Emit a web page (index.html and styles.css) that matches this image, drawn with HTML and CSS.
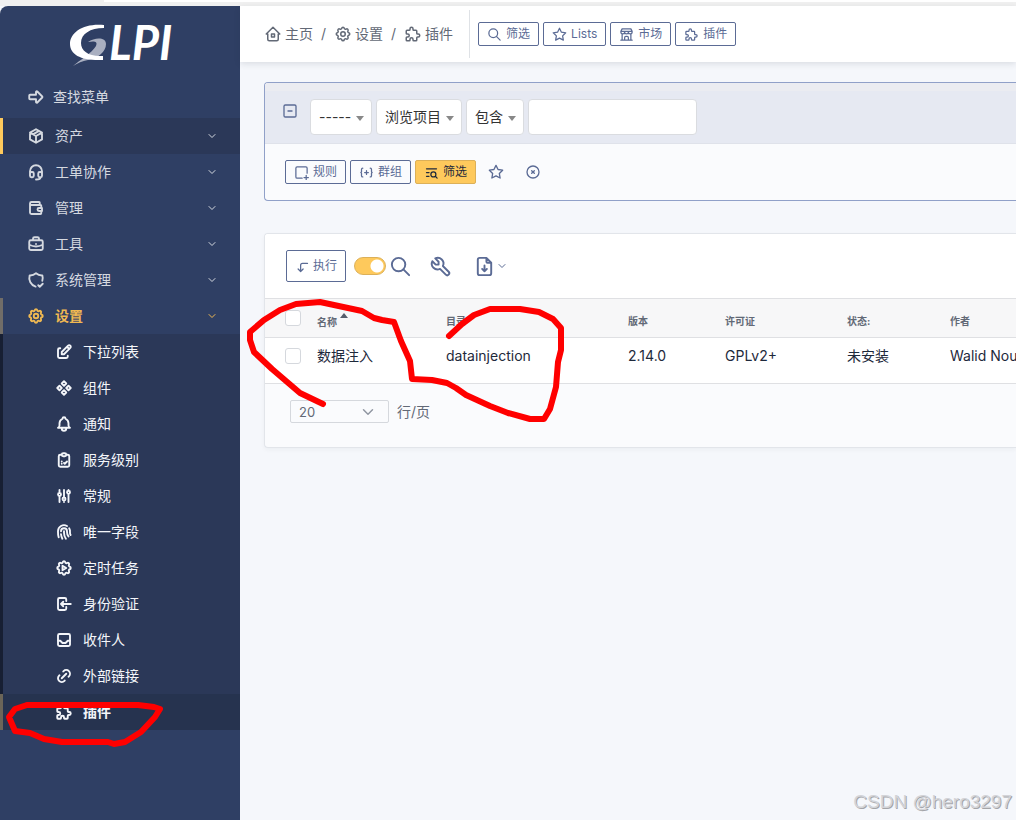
FILE: index.html
```html
<!DOCTYPE html>
<html lang="zh-CN">
<head>
    <meta charset="UTF-8">
    <meta name="viewport" content="width=device-width, initial-scale=1.0">
    <title>GLPI - 插件</title>
    <link rel="stylesheet" href="styles.css">
</head>
<body>
    <!-- Icons -->
    <svg class="sprite" aria-hidden="true">
        <symbol id="i-arrow" viewBox="0 0 24 24"><path d="M4 9h8v-3.586a1 1 0 0 1 1.707 -.707l6.586 6.586a1 1 0 0 1 0 1.414l-6.586 6.586a1 1 0 0 1 -1.707 -.707v-3.586h-8a1 1 0 0 1 -1 -1v-4a1 1 0 0 1 1 -1z"/></symbol>
        <symbol id="i-package" viewBox="0 0 24 24"><path d="M12 3l8 4.5v9l-8 4.5l-8 -4.5v-9l8 -4.5M12 12l8 -4.5M12 12v9M12 12l-8 -4.5M16 5.25l-8 4.5"/></symbol>
        <symbol id="i-headset" viewBox="0 0 24 24"><path d="M4 14v-3a8 8 0 1 1 16 0v3M18 19c0 1.657 -2.686 3 -6 3M4 14a2 2 0 0 1 2 -2h1a2 2 0 0 1 2 2v3a2 2 0 0 1 -2 2h-1a2 2 0 0 1 -2 -2zM15 14a2 2 0 0 1 2 -2h1a2 2 0 0 1 2 2v3a2 2 0 0 1 -2 2h-1a2 2 0 0 1 -2 -2z"/></symbol>
        <symbol id="i-wallet" viewBox="0 0 24 24"><path d="M17 8v-3a1 1 0 0 0 -1 -1h-10a2 2 0 0 0 0 4h12a1 1 0 0 1 1 1v3m0 4v3a1 1 0 0 1 -1 1h-12a2 2 0 0 1 -2 -2v-12M20 12v4h-4a2 2 0 0 1 0 -4h4"/></symbol>
        <symbol id="i-briefcase" viewBox="0 0 24 24"><path d="M3 9a2 2 0 0 1 2 -2h14a2 2 0 0 1 2 2v9a2 2 0 0 1 -2 2h-14a2 2 0 0 1 -2 -2zM8 7v-2a2 2 0 0 1 2 -2h4a2 2 0 0 1 2 2v2M12 12v.01M3 13a20 20 0 0 0 18 0"/></symbol>
        <symbol id="i-shield" viewBox="0 0 24 24"><path d="M11.46 20.846a12 12 0 0 1 -7.96 -14.846a12 12 0 0 0 8.5 -3a12 12 0 0 0 8.5 3a12 12 0 0 1 -.09 7.06M15 19l2 2l4 -4"/></symbol>
        <symbol id="i-gear" viewBox="0 0 24 24"><path d="M10.325 4.317c.426 -1.756 2.924 -1.756 3.35 0a1.724 1.724 0 0 0 2.573 1.066c1.543 -.94 3.31 .826 2.37 2.37a1.724 1.724 0 0 0 1.065 2.572c1.756 .426 1.756 2.924 0 3.35a1.724 1.724 0 0 0 -1.066 2.573c.94 1.543 -.826 3.31 -2.37 2.37a1.724 1.724 0 0 0 -2.572 1.065c-.426 1.756 -2.924 1.756 -3.35 0a1.724 1.724 0 0 0 -2.573 -1.066c-1.543 .94 -3.31 -.826 -2.37 -2.37a1.724 1.724 0 0 0 -1.065 -2.572c-1.756 -.426 -1.756 -2.924 0 -3.35a1.724 1.724 0 0 0 1.066 -2.573c-.94 -1.543 .826 -3.31 2.37 -2.37c1 .608 2.296 .07 2.572 -1.065z"/><circle cx="12" cy="12" r="3"/></symbol>
        <symbol id="i-auto" viewBox="0 0 24 24"><path d="M10.325 4.317c.426 -1.756 2.924 -1.756 3.35 0a1.724 1.724 0 0 0 2.573 1.066c1.543 -.94 3.31 .826 2.37 2.37a1.724 1.724 0 0 0 1.065 2.572c1.756 .426 1.756 2.924 0 3.35a1.724 1.724 0 0 0 -1.066 2.573c.94 1.543 -.826 3.31 -2.37 2.37a1.724 1.724 0 0 0 -2.572 1.065c-.426 1.756 -2.924 1.756 -3.35 0a1.724 1.724 0 0 0 -2.573 -1.066c-1.543 .94 -3.31 -.826 -2.37 -2.37a1.724 1.724 0 0 0 -1.065 -2.572c-1.756 -.426 -1.756 -2.924 0 -3.35a1.724 1.724 0 0 0 1.066 -2.573c-.94 -1.543 .826 -3.31 2.37 -2.37c1 .608 2.296 .07 2.572 -1.065zM10 9v6l5 -3z"/></symbol>
        <symbol id="i-edit" viewBox="0 0 24 24"><path d="M7 7h-1a2 2 0 0 0 -2 2v9a2 2 0 0 0 2 2h9a2 2 0 0 0 2 -2v-1M20.385 6.585a2.1 2.1 0 0 0 -2.97 -2.97l-8.415 8.385v3h3l8.385 -8.415zM16 5l3 3"/></symbol>
        <symbol id="i-components" viewBox="0 0 24 24"><path d="M3 12l3 3l3 -3l-3 -3zM15 12l3 3l3 -3l-3 -3zM9 6l3 3l3 -3l-3 -3zM9 18l3 3l3 -3l-3 -3z"/></symbol>
        <symbol id="i-bell" viewBox="0 0 24 24"><path d="M10 5a2 2 0 1 1 4 0a7 7 0 0 1 4 6v3a4 4 0 0 0 2 3h-16a4 4 0 0 0 2 -3v-3a7 7 0 0 1 4 -6M9 17v1a3 3 0 0 0 6 0v-1"/></symbol>
        <symbol id="i-checkup" viewBox="0 0 24 24"><path d="M9 5h-2a2 2 0 0 0 -2 2v12a2 2 0 0 0 2 2h10a2 2 0 0 0 2 -2v-12a2 2 0 0 0 -2 -2h-2M9 5a2 2 0 0 1 2 -2h2a2 2 0 0 1 2 2a2 2 0 0 1 -2 2h-2a2 2 0 0 1 -2 -2zM9 14h.01M9 17h.01M12 16l1 1l3 -3"/></symbol>
        <symbol id="i-adjust" viewBox="0 0 24 24"><path d="M4 10a2 2 0 1 0 4 0a2 2 0 0 0 -4 0M6 4v4M6 12v8M10 16a2 2 0 1 0 4 0a2 2 0 0 0 -4 0M12 4v10M12 18v2M16 7a2 2 0 1 0 4 0a2 2 0 0 0 -4 0M18 4v1M18 9v11"/></symbol>
        <symbol id="i-finger" viewBox="0 0 24 24"><path d="M18.9 7a8 8 0 0 1 1.1 5v1a6 6 0 0 0 .8 3M8 11a4 4 0 0 1 8 0v1a10 10 0 0 0 2 6M12 11v2a14 14 0 0 0 2.5 8M8 15a18 18 0 0 0 1.8 6M4.9 19a22 22 0 0 1 -.9 -7v-1a8 8 0 0 1 12 -6.95"/></symbol>
        <symbol id="i-login" viewBox="0 0 24 24"><path d="M15 8v-2a2 2 0 0 0 -2 -2h-7a2 2 0 0 0 -2 2v12a2 2 0 0 0 2 2h7a2 2 0 0 0 2 -2v-2M21 12h-13l3 -3M11 15l-3 -3"/></symbol>
        <symbol id="i-inbox" viewBox="0 0 24 24"><rect x="4" y="4" width="16" height="16" rx="2"/><path d="M4 13h3l3 3h4l3 -3h3"/></symbol>
        <symbol id="i-link" viewBox="0 0 24 24"><path d="M9 15l6 -6M11 6l.463 -.536a5 5 0 0 1 7.071 7.072l-.534 .464M13 18l-.397 .534a5.068 5.068 0 0 1 -7.127 0a4.972 4.972 0 0 1 0 -7.071l.524 -.463"/></symbol>
        <symbol id="i-puzzle" viewBox="0 0 24 24"><path d="M4 7h3a1 1 0 0 0 1 -1v-1a2 2 0 0 1 4 0v1a1 1 0 0 0 1 1h3a1 1 0 0 1 1 1v3a1 1 0 0 0 1 1h1a2 2 0 0 1 0 4h-1a1 1 0 0 0 -1 1v3a1 1 0 0 1 -1 1h-3a1 1 0 0 1 -1 -1v-1a2 2 0 0 0 -4 0v1a1 1 0 0 1 -1 1h-3a1 1 0 0 1 -1 -1v-3a1 1 0 0 1 1 -1h1a2 2 0 0 0 0 -4h-1a1 1 0 0 1 -1 -1v-3a1 1 0 0 1 1 -1"/></symbol>
        <symbol id="i-home" viewBox="0 0 24 24"><path d="M5 12h-2l9 -9l9 9h-2M5 12v7a2 2 0 0 0 2 2h10a2 2 0 0 0 2 -2v-7M10 12h4v4h-4z"/></symbol>
        <symbol id="i-star" viewBox="0 0 24 24"><path d="M12 17.75l-6.172 3.245l1.179 -6.873l-5 -4.867l6.9 -1l3.086 -6.253l3.086 6.253l6.9 1l-5 4.867l1.179 6.873z"/></symbol>
        <symbol id="i-search" viewBox="0 0 24 24"><circle cx="10" cy="10" r="7"/><path d="M21 21l-6 -6"/></symbol>
        <symbol id="i-store" viewBox="0 0 24 24"><path d="M3 21h18M3 7v1a3 3 0 0 0 6 0v-1m0 1a3 3 0 0 0 6 0v-1m0 1a3 3 0 0 0 6 0v-1h-18l2 -4h14l2 4M5 21v-10.15M19 21v-10.15M9 21v-4a2 2 0 0 1 2 -2h2a2 2 0 0 1 2 2v4"/></symbol>
        <symbol id="i-rule" viewBox="0 0 24 24"><path d="M13 21h-8a2 2 0 0 1 -2 -2v-14a2 2 0 0 1 2 -2h14a2 2 0 0 1 2 2v8M16 20h7M19.500 16.500v7"/></symbol>
        <symbol id="i-group" viewBox="0 0 24 24"><path d="M9 12h6M12 9v6M6 19a2 2 0 0 1 -2 -2v-4l-1 -1l1 -1v-4a2 2 0 0 1 2 -2M18 19a2 2 0 0 0 2 -2v-4l1 -1l-1 -1v-4a2 2 0 0 0 -2 -2"/></symbol>
        <symbol id="i-listsearch" viewBox="0 0 24 24"><circle cx="15" cy="15" r="4"/><path d="M18.500 18.500l2.500 2.500M4 6h16M4 12h4M4 18h4"/></symbol>
        <symbol id="i-clear" viewBox="0 0 24 24"><circle cx="12" cy="12" r="9"/><path d="M10 10l4 4M14 10l-4 4"/></symbol>
        <symbol id="i-minus" viewBox="0 0 24 24"><rect x="3" y="3" width="18" height="18" rx="2"/><path d="M9 12h6"/></symbol>
        <symbol id="i-tool" viewBox="0 0 24 24"><path d="M7 10h3v-3l-3.500 -3.500a6 6 0 0 1 8 8l6 6a2 2 0 0 1 -3 3l-6 -6a6 6 0 0 1 -8 -8l3.500 3.500"/></symbol>
        <symbol id="i-download" viewBox="0 0 24 24"><path d="M14 3v4a1 1 0 0 0 1 1h4M17 21h-10a2 2 0 0 1 -2 -2v-14a2 2 0 0 1 2 -2h7l5 5v11a2 2 0 0 1 -2 2zM12 17v-6M9.500 14.500l2.500 2.500l2.500 -2.500"/></symbol>
        <symbol id="i-corner" viewBox="0 0 24 24"><path d="M20 7h-8a3 3 0 0 0 -3 3v10l-4 -4m8 0l-4 4"/></symbol>
        <symbol id="i-chevron" viewBox="0 0 24 24"><path d="M6 9l6 6l6 -6"/></symbol>
    </svg>

    <div class="top-strip"><div class="tab"></div></div>

    <div class="page">
        <aside class="sidebar">
            <a class="logo" href="#" aria-label="GLPI">
                <svg width="120" height="52" viewBox="0 0 120 52">
                    <path class="logo-tail" d="M5 43C12 37 24 30 28 23C30 18 26 18 20 19C27 14 38 14 38 21C38 29 30 35 20 37C14 38 10 40 5 43z"/>
                    <path class="logo-mark" d="M36 2C16 0 2 9 2 21C2 32 14 38 35 37V33C21 34 13 28 13 20C13 11 22 5 36 5z"/>
                    <text class="logo-text" x="41" y="37">LPI</text>
                </svg>
            </a>
            <nav>
                <a class="find" href="#"><svg class="icon"><use href="#i-arrow"/></svg>查找菜单</a>
                <ul class="menu">
                    <li><a class="item current" href="#"><svg class="icon"><use href="#i-package"/></svg><span>资产</span><svg class="chevron"><use href="#i-chevron"/></svg></a></li>
                    <li><a class="item" href="#"><svg class="icon"><use href="#i-headset"/></svg><span>工单协作</span><svg class="chevron"><use href="#i-chevron"/></svg></a></li>
                    <li><a class="item" href="#"><svg class="icon"><use href="#i-wallet"/></svg><span>管理</span><svg class="chevron"><use href="#i-chevron"/></svg></a></li>
                    <li><a class="item" href="#"><svg class="icon"><use href="#i-briefcase"/></svg><span>工具</span><svg class="chevron"><use href="#i-chevron"/></svg></a></li>
                    <li><a class="item" href="#"><svg class="icon"><use href="#i-shield"/></svg><span>系统管理</span><svg class="chevron"><use href="#i-chevron"/></svg></a></li>
                    <li>
                        <a class="item open" href="#"><svg class="icon"><use href="#i-gear"/></svg><span>设置</span><svg class="chevron"><use href="#i-chevron"/></svg></a>
                        <ul class="submenu">
                            <li><a class="subitem" href="#"><svg class="icon"><use href="#i-edit"/></svg>下拉列表</a></li>
                            <li><a class="subitem" href="#"><svg class="icon"><use href="#i-components"/></svg>组件</a></li>
                            <li><a class="subitem" href="#"><svg class="icon"><use href="#i-bell"/></svg>通知</a></li>
                            <li><a class="subitem" href="#"><svg class="icon"><use href="#i-checkup"/></svg>服务级别</a></li>
                            <li><a class="subitem" href="#"><svg class="icon"><use href="#i-adjust"/></svg>常规</a></li>
                            <li><a class="subitem" href="#"><svg class="icon"><use href="#i-finger"/></svg>唯一字段</a></li>
                            <li><a class="subitem" href="#"><svg class="icon"><use href="#i-auto"/></svg>定时任务</a></li>
                            <li><a class="subitem" href="#"><svg class="icon"><use href="#i-login"/></svg>身份验证</a></li>
                            <li><a class="subitem" href="#"><svg class="icon"><use href="#i-inbox"/></svg>收件人</a></li>
                            <li><a class="subitem" href="#"><svg class="icon"><use href="#i-link"/></svg>外部链接</a></li>
                            <li><a class="subitem active" href="#"><svg class="icon"><use href="#i-puzzle"/></svg>插件</a></li>
                        </ul>
                    </li>
                </ul>
            </nav>
        </aside>

        <div class="main">
            <header class="header">
                <nav class="breadcrumb">
                    <a href="#"><svg class="icon"><use href="#i-home"/></svg>主页</a>
                    <span>/</span>
                    <a href="#"><svg class="icon"><use href="#i-gear"/></svg>设置</a>
                    <span>/</span>
                    <a href="#"><svg class="icon"><use href="#i-puzzle"/></svg>插件</a>
                </nav>
                <div class="header-actions">
                    <button class="btn" type="button"><svg class="icon"><use href="#i-search"/></svg>筛选</button>
                    <button class="btn" type="button"><svg class="icon"><use href="#i-star"/></svg>Lists</button>
                    <button class="btn" type="button"><svg class="icon"><use href="#i-store"/></svg>市场</button>
                    <button class="btn" type="button"><svg class="icon"><use href="#i-puzzle"/></svg>插件</button>
                </div>
            </header>

            <main class="content">
                <form class="filter">
                    <div class="criteria">
                        <button class="icon-btn collapse" type="button" aria-label="删除规则"><svg class="icon"><use href="#i-minus"/></svg></button>
                        <div class="select"><select class="w-link" aria-label="逻辑"><option>-----</option></select></div>
                        <div class="select"><select class="w-field" aria-label="项目"><option>浏览项目</option></select></div>
                        <div class="select"><select class="w-type" aria-label="条件"><option>包含</option></select></div>
                        <input class="value" type="text" aria-label="值">
                    </div>
                    <div class="filter-actions">
                        <button class="btn" type="button"><svg class="icon"><use href="#i-rule"/></svg>规则</button>
                        <button class="btn" type="button"><svg class="icon"><use href="#i-group"/></svg>群组</button>
                        <button class="btn primary" type="button"><svg class="icon"><use href="#i-listsearch"/></svg>筛选</button>
                        <button class="icon-btn" type="button" aria-label="收藏"><svg class="icon"><use href="#i-star"/></svg></button>
                        <button class="icon-btn" type="button" aria-label="清除"><svg class="icon"><use href="#i-clear"/></svg></button>
                    </div>
                </form>

                <section class="results">
                    <div class="toolbar">
                        <button class="btn run" type="button"><svg class="icon"><use href="#i-corner"/></svg>执行</button>
                        <input class="switch" type="checkbox" aria-label="显示筛选" checked>
                        <div class="tools">
                            <button class="icon-btn" type="button" aria-label="搜索"><svg class="icon"><use href="#i-search"/></svg></button>
                            <button class="icon-btn" type="button" aria-label="显示设置"><svg class="icon"><use href="#i-tool"/></svg></button>
                            <button class="icon-btn" type="button" aria-label="导出"><svg class="icon"><use href="#i-download"/></svg><svg class="chevron"><use href="#i-chevron"/></svg></button>
                        </div>
                    </div>
                    <table class="table">
                        <thead>
                            <tr>
                                <th class="c-check"><input type="checkbox" aria-label="全选"></th>
                                <th class="c-name">名称<i class="sort"></i></th>
                                <th class="c-dir">目录</th>
                                <th class="c-version">版本</th>
                                <th class="c-license">许可证</th>
                                <th class="c-state">状态:</th>
                                <th>作者</th>
                            </tr>
                        </thead>
                        <tbody>
                            <tr>
                                <td><input type="checkbox" aria-label="选择"></td>
                                <td>数据注入</td>
                                <td>datainjection</td>
                                <td>2.14.0</td>
                                <td>GPLv2+</td>
                                <td>未安装</td>
                                <td>Walid Nou</td>
                            </tr>
                        </tbody>
                    </table>
                    <div class="pager">
                        <div class="page-size">
                            <select id="rows"><option>20</option></select>
                            <svg class="chevron"><use href="#i-chevron"/></svg>
                        </div>
                        <label for="rows">行/页</label>
                    </div>
                </section>
            </main>
        </div>
    </div>

    <!-- Hand-drawn marks -->
    <svg class="marks" width="600" height="760" viewBox="0 0 600 760" aria-hidden="true">
        <path d="M323 404L300 393L272 369L254 352L250 340L250 332L264 320L280 310L296 304L320 302L348 308L362 311L374 318L382 320L394 322L401 341L410 361L412 379L432 380L447 383L456 388L466 395L490 406L508 413L530 419L544 419L550 409L556 387L558 362L561 350L561 328L553 319L539 312L520 309L490 309L474 315L462 324L449 336"/>
        <path d="M27 705H138L154 707L160 709L155 717L141 732L125 742L114 744L108 742H62L44 739L30 733L15 731L9 717L15 709L27 705"/>
    </svg>
    <div class="watermark">CSDN @hero3297</div>
</body>
</html>
```

FILE: styles.css
```css
* {
    box-sizing: border-box;
}

body {
    margin: 0;
    position: relative;
    display: flex;
    flex-direction: column;
    min-height: 100vh;
    overflow-x: hidden;
    background-color: #f5f7fb;
    color: #1e293b;
    font-family: Inter, "Noto Sans CJK SC", sans-serif;
    font-size: 14px;
    line-height: 20px;
}

a {
    color: inherit;
    text-decoration: none;
}

ul {
    list-style: none;
    margin: 0;
    padding: 0;
}

button,
input,
select {
    font: inherit;
    color: inherit;
    margin: 0;
}

.sprite {
    display: none;
}

.icon,
.chevron {
    flex: none;
    width: 18px;
    height: 18px;
    fill: none;
    stroke: currentColor;
    stroke-width: 2;
    stroke-linecap: round;
    stroke-linejoin: round;
}

.chevron {
    width: 12px;
    height: 12px;
}

.top-strip {
    height: 6px;
    background-color: #f0f0f0;
}

.tab {
    height: 2px;
    margin-left: 104px;
    background-color: #ffffff;
}

.page {
    flex: 1;
    display: flex;
}

/* Sidebar */
.sidebar {
    flex: none;
    width: 240px;
    background-color: #2f3f64;
    border-top-left-radius: 8px;
    color: #d5d9e0;
}

.sidebar .icon {
    stroke-width: 2.5;
}

.logo {
    display: block;
    height: 72px;
    padding: 17px 0 0 68px;
}

.logo svg {
    display: block;
}

.logo-mark,
.logo-text {
    fill: #ffffff;
}

.logo-tail {
    fill: #a9afc0;
}

.logo-text {
    font-family: Lato, sans-serif;
    font-size: 47px;
    font-style: italic;
    font-weight: bold;
}

.find {
    display: flex;
    align-items: center;
    gap: 8px;
    height: 40px;
    padding: 0 0 2px 27px;
}

.item {
    display: flex;
    align-items: center;
    gap: 10px;
    height: 36px;
    padding: 0 22px 0 24px;
    border-left: 3px solid transparent;
}

.item span {
    flex: 1;
}

.item.current {
    background-color: #2b3858;
    border-left-color: #fec95c;
}

.item.open {
    color: #f0b952;
    border-left-color: #716d68;
    font-weight: bold;
}

.subitem {
    display: flex;
    align-items: center;
    gap: 10px;
    height: 36px;
    padding-left: 52px;
    background-color: #2b3858;
    border-left: 3px solid #171f33;
    color: #f4f6fa;
}

.subitem.active {
    background-color: #26334f;
    border-left-color: #6b6558;
    font-weight: bold;
}

/* Header */
.main {
    flex: 1;
    min-width: 0;
}

.header {
    display: flex;
    align-items: center;
    height: 56px;
    padding-left: 24px;
    background-color: #ffffff;
    box-shadow: 0 2px 6px rgba(30, 41, 59, 0.12);
    white-space: nowrap;
}

.breadcrumb {
    display: flex;
    align-items: center;
    gap: 8px;
    height: 48px;
    padding-right: 16px;
    border-right: 1px solid #dfe2e6;
    color: #626976;
}

.breadcrumb a {
    display: flex;
    align-items: center;
    gap: 3px;
}

.header-actions {
    display: flex;
    gap: 4px;
    padding-left: 8px;
}

.btn {
    display: flex;
    align-items: center;
    justify-content: center;
    gap: 4px;
    height: 24px;
    padding: 0 8px;
    border: 1px solid #5b6b95;
    border-radius: 2px;
    background-color: transparent;
    color: #5b6b95;
    font-size: 12px;
    line-height: 16px;
    white-space: nowrap;
}

.btn .icon {
    width: 15px;
    height: 15px;
}

.btn.primary {
    background-color: #fec95c;
    border-color: #dcb058;
    color: #1e293b;
}

.icon-btn {
    display: flex;
    align-items: center;
    padding: 0;
    border: 0;
    background: none;
    color: #5b6b95;
}

/* Filter form */
.content {
    padding: 20px 0 0 24px;
}

.filter,
.results {
    border: 1px solid #90a0c8;
    border-right: 0;
    border-radius: 4px 0 0 4px;
    background-color: #fafbfd;
    overflow: hidden;
}

.criteria {
    display: flex;
    gap: 4px;
    padding: 8px 0 8px 17px;
    border-top: 8px solid #ebecf1;
    border-bottom: 1px solid #dfe2ea;
    background-color: #e6e9f2;
}

.collapse {
    align-self: flex-start;
    margin: 4px 8px 0 0;
}

.collapse .icon {
    width: 16px;
    height: 16px;
}

.select {
    position: relative;
}

.select::after {
    content: "";
    position: absolute;
    top: 17px;
    right: 8px;
    border: 4px solid transparent;
    border-top: 5px solid #888888;
    border-bottom: 0;
    pointer-events: none;
}

.select select,
.value {
    height: 36px;
    padding: 0 8px;
    border: 1px solid #dadce0;
    border-radius: 4px;
    background-color: #ffffff;
    color: #333333;
    appearance: none;
}

.w-link {
    width: 62px;
}

.w-field {
    width: 86px;
}

.w-type {
    width: 58px;
}

.value {
    width: 169px;
}

.filter-actions {
    display: flex;
    gap: 4px;
    padding: 16px 0 16px 20px;
}

.filter-actions .icon-btn {
    padding: 0 8px;
}

.filter-actions .icon-btn + .icon-btn {
    margin-left: 1px;
}

.filter-actions .icon-btn .icon {
    width: 16px;
    height: 16px;
}

/* Results */
.results {
    margin-top: 32px;
    border-color: #e2e5ea;
    box-shadow: 0 2px 4px rgba(30, 41, 59, 0.04);
}

.toolbar {
    display: flex;
    align-items: center;
    gap: 8px;
    height: 64px;
    padding-left: 21px;
    background-color: #ffffff;
}

.run {
    gap: 3px;
    height: 32px;
}

.switch {
    appearance: none;
    width: 32px;
    height: 18px;
    border: 1px solid #dcb058;
    border-radius: 9px;
    background: radial-gradient(circle at 22px 8px, #ffffff 6px, #fec95c 7px);
}

.tools {
    display: flex;
    gap: 17px;
    margin-left: -5px;
}

.tools .icon {
    width: 23px;
    height: 23px;
}

.tools .icon-btn:last-child {
    margin-left: 4px;
}

.table {
    width: 100%;
    table-layout: fixed;
    border-collapse: collapse;
    white-space: nowrap;
}

.table th {
    height: 39px;
    padding: 6px 0 0;
    border-top: 1px solid #dfe0e3;
    border-bottom: 1px solid #dfe0e3;
    background-color: #f7f7f8;
    color: #626976;
    font-size: 10px;
    line-height: 16px;
    text-align: left;
}

.table td {
    height: 46px;
    padding: 0 0 10px;
    border-bottom: 1px solid #dfe0e3;
    background-color: #ffffff;
}

.table th:first-child,
.table td:first-child {
    padding-left: 20px;
}

.table th:first-child {
    padding-top: 0;
}

.table input {
    display: block;
    appearance: none;
    width: 16px;
    height: 16px;
    border: 1px solid #d5d8dd;
    border-radius: 3px;
    background-color: #ffffff;
}

.c-check {
    width: 52px;
}

.c-name {
    width: 129px;
}

.c-dir {
    width: 182px;
}

.c-version {
    width: 97px;
}

.c-license {
    width: 122px;
}

.c-state {
    width: 103px;
}

.sort {
    display: inline-block;
    margin-left: 3px;
    vertical-align: 8px;
    border: 4px solid transparent;
    border-top: 0;
    border-bottom: 5px solid #565e6c;
}

.pager {
    display: flex;
    align-items: center;
    gap: 8px;
    padding: 16px 0 24px 25px;
    color: #626976;
}

.page-size {
    position: relative;
}

.page-size select {
    display: block;
    width: 99px;
    height: 23px;
    padding: 0 8px;
    border: 1px solid #d5d8dd;
    border-radius: 2px;
    background-color: #fafbfd;
    font-size: 13px;
    appearance: none;
}

.page-size .chevron {
    position: absolute;
    top: 3px;
    right: 12px;
    width: 18px;
    height: 18px;
    color: #9298a3;
    pointer-events: none;
}

/* Overlays */
.marks {
    position: absolute;
    top: 0;
    left: 0;
    fill: none;
    stroke: #ff0000;
    stroke-width: 6;
    stroke-linecap: round;
    stroke-linejoin: round;
    pointer-events: none;
}

.watermark {
    position: absolute;
    right: 4px;
    bottom: 7px;
    color: #d3d4d8;
    font-family: "Liberation Sans", Arial, sans-serif;
    font-size: 19px;
    line-height: 22px;
    text-shadow: 1px 1px 0 #a4a5a9;
}
```
